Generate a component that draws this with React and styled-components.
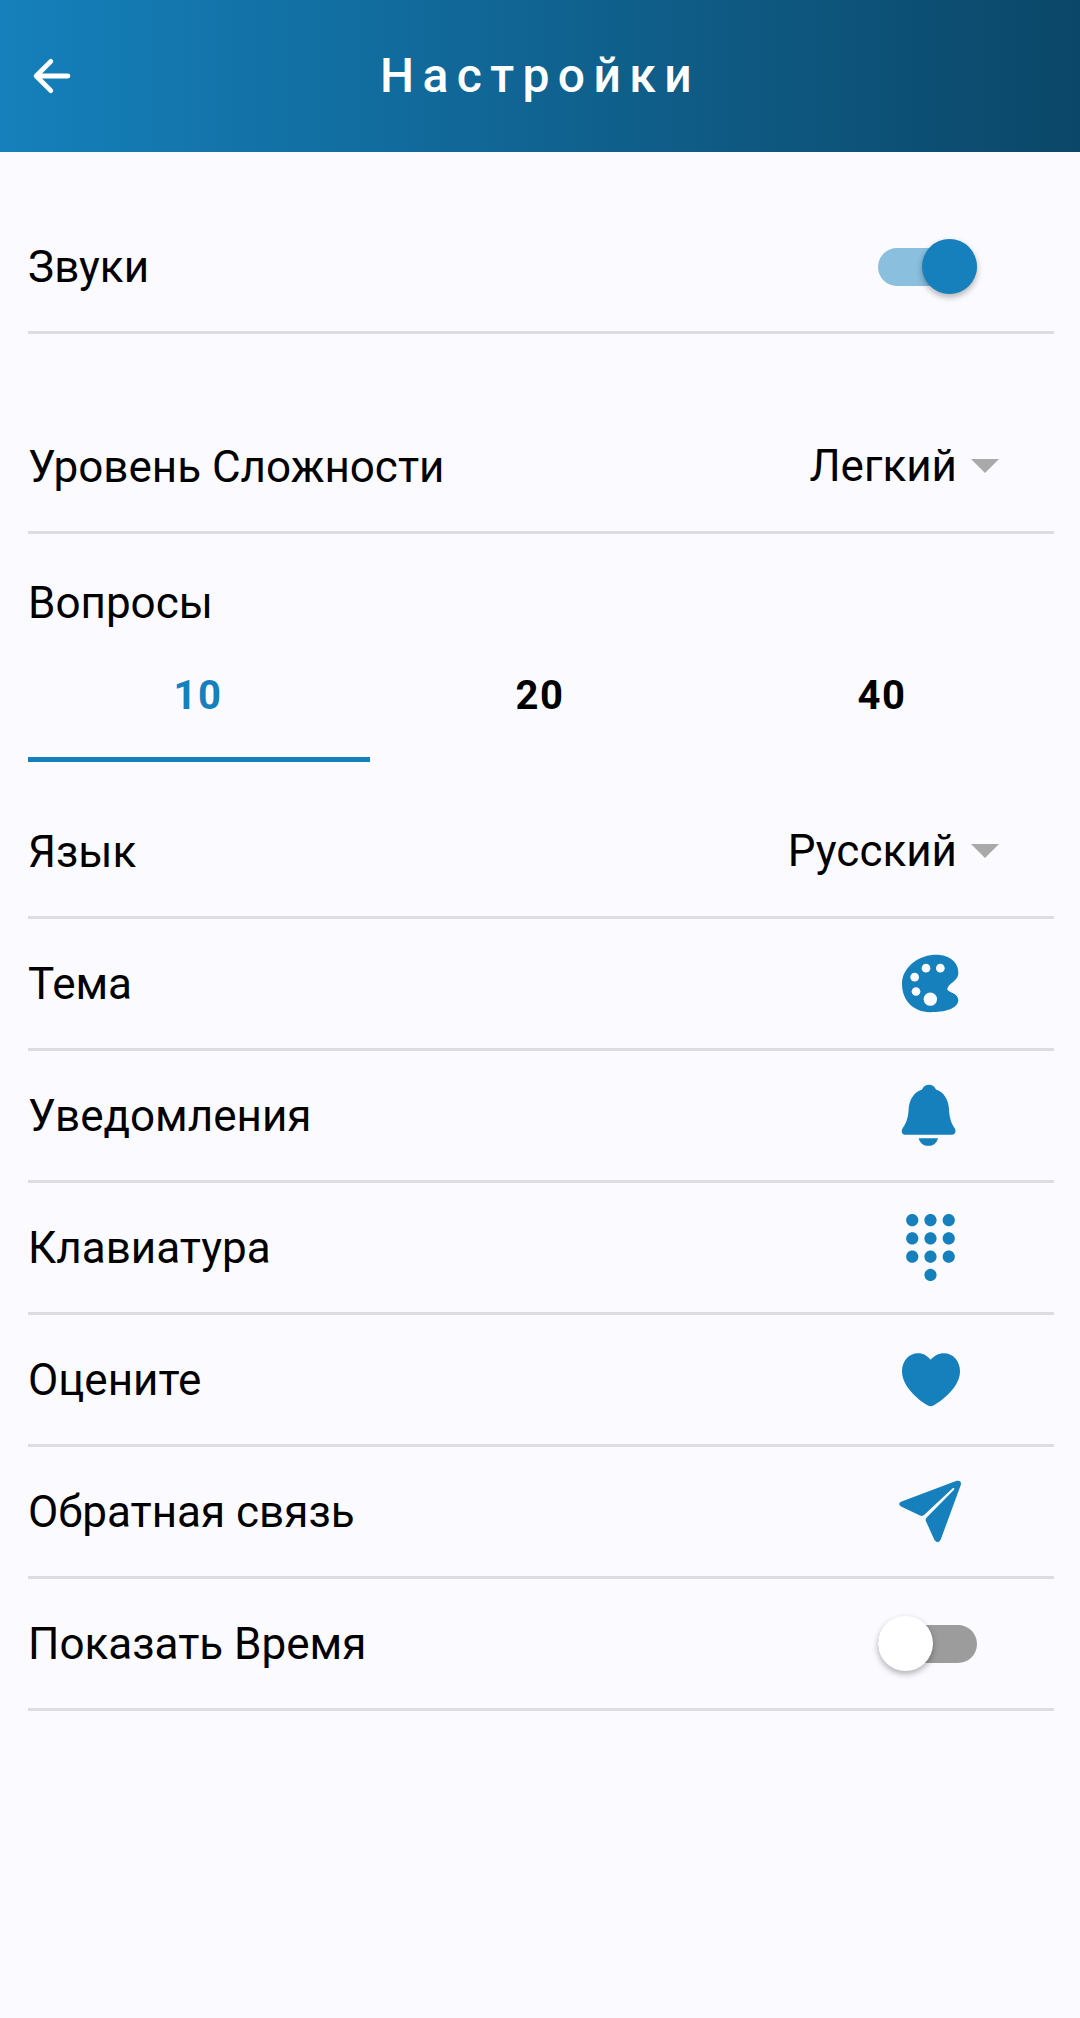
import React from 'react';
import styled, { createGlobalStyle } from 'styled-components';
import { IoArrowBack } from 'react-icons/io5';
import { MdDialpad } from 'react-icons/md';

const GlobalStyle = createGlobalStyle`
    html, body {
        margin: 0;
        padding: 0;
        background: #fbfbff;
        font-family: Roboto, "Liberation Sans", sans-serif;
    }
`;

const Screen = styled.div`
    width: 1080px;
    height: 2018px;
    background: #fbfbff;
    overflow: hidden;
`;

const Header = styled.header`
    height: 152px;
    padding: 0 26px;
    box-sizing: border-box;
    display: flex;
    align-items: center;
    position: relative;
    background: linear-gradient(90deg, #1580bb 0%, #0b4768 100%);
    color: #fff;
`;

const BackIcon = styled(IoArrowBack)`
    width: 52px;
    height: 52px;
`;

const Title = styled.h1`
    flex: 1;
    margin: 0 0 0 -52px;
    padding-bottom: 2px;
    text-align: center;
    font-size: 48px;
    font-weight: 500;
    letter-spacing: 8.4px;
`;

const List = styled.main`
    padding: 50px 26px 0 28px;
`;

const Row = styled.div`
    height: 129px;
    margin-top: ${props => props.$top || 0}px;
    border-bottom: 3px solid #dcdce1;
    display: flex;
    align-items: center;
    justify-content: space-between;
`;

const Label = styled.span`
    font-size: 44px;
    color: #000;
`;

const SideSlot = styled.div`
    width: 100px;
    margin-right: 77px;
    display: flex;
    justify-content: center;
    color: #1580bb;
`;

const IconSlot = styled(SideSlot)`
    width: 80px;
    margin-right: 84px;
`;

const Select = styled.div`
    display: flex;
    align-items: center;
    margin-right: 54px;
    padding-bottom: 2px;
    font-size: 44px;
    color: #000;
`;

const Caret = styled.i`
    width: 0;
    height: 0;
    margin-left: 14px;
    margin-right: 1px;
    border-left: 14px solid transparent;
    border-right: 14px solid transparent;
    border-top: 14px solid #a9a9a9;
`;

const Track = styled.div`
    width: 99px;
    height: 38px;
    border-radius: 19px;
    position: relative;
    background: ${props => props.$on ? '#8abfdd' : '#9c9c9c'};
`;

const Thumb = styled.div`
    width: 55px;
    height: 55px;
    border-radius: 50%;
    position: absolute;
    top: -9px;
    ${props => props.$on ? 'right: 0;' : 'left: 0;'}
    background: ${props => props.$on ? '#1580bb' : '#fff'};
    box-shadow: 0 3px 6px rgba(0, 0, 0, 0.3);
`;

const QuestionsTitle = styled.div`
    font-size: 44px;
    color: #000;
    padding-top: 45px;
    line-height: 49px;
`;

const Tabs = styled.div`
    display: flex;
    width: 1026px;
    margin-top: 27px;
`;

const Tab = styled.div`
    flex: 1;
    height: 107px;
    padding: 17px 2px 0 0;
    box-sizing: border-box;
    text-align: center;
    font-size: 40px;
    font-weight: 700;
    letter-spacing: 1.5px;
    color: ${props => props.$active ? '#1580bb' : '#000'};
    border-bottom: 5px solid ${props => props.$active ? '#1580bb' : 'transparent'};
`;

function Toggle({ on }) {
    return (
        <Track $on={on}>
            <Thumb $on={on} />
        </Track>
    );
}

// icons traced on a 240 grid, the offset keeps them centred in the row
function Glyph({ offset = 0, children }) {
    return (
        <svg width="80" height="80" viewBox={`0 ${offset} 240 240`} fill="currentColor">
            {children}
        </svg>
    );
}

const PaletteIcon = () => (
    <Glyph offset={-4.5}>
        <path d="M130 28C175 24 208 50 205 85C203 108 176 112 172 130C170 142 205 140 205 165C202 190 165 200 120 200C70 200 36 165 36 115C36 70 80 32 130 28Z" />
        <circle cx="108" cy="68" r="13" fill="#fbfbff" />
        <circle cx="151" cy="68" r="13" fill="#fbfbff" />
        <circle cx="74" cy="95" r="13" fill="#fbfbff" />
        <circle cx="78" cy="138" r="13" fill="#fbfbff" />
        <circle cx="121" cy="161" r="20" fill="#fbfbff" />
    </Glyph>
);

const BellIcon = () => (
    <Glyph offset={1.5}>
        <path d="M117 28C127 28 134 34 138 42C162 50 175 72 177 100C178 130 185 145 194 158C200 168 195 178 184 178L47 178C36 178 32 168 38 158C47 145 55 130 56 100C58 72 72 50 96 42C100 34 107 28 117 28Z" />
        <path d="M86 188L144 188C140 203 130 211 115 211C100 211 90 203 86 188Z" />
    </Glyph>
);

const HeartIcon = () => (
    <Glyph offset={-1.5}>
        <path d="M122 58C135 42 150 38 162 38C190 38 210 62 210 92C210 135 165 175 130 195Q122 199 114 195C80 175 36 135 36 92C36 62 56 38 84 38C96 38 110 42 122 58Z" />
    </Glyph>
);

const PlaneIcon = () => (
    <Glyph offset={4.5}>
        <path d="M200 31Q216 28 212 44L152 208Q143 222 133 208L107 150Q106 145 110 141L192 58Q195 52 188 53L103 133Q97 138 90 135L33 108Q22 100 33 94Z" />
    </Glyph>
);

const iconRows = [
    { label: 'Тема', icon: <PaletteIcon /> },
    { label: 'Уведомления', icon: <BellIcon /> },
    { label: 'Клавиатура', icon: <MdDialpad size={73} /> },
    { label: 'Оцените', icon: <HeartIcon /> },
    { label: 'Обратная связь', icon: <PlaneIcon /> },
];

function App() {
    return (
        <Screen>
            <GlobalStyle />
            <Header>
                <BackIcon />
                <Title>Настройки</Title>
            </Header>
            <List>
                <Row>
                    <Label>Звуки</Label>
                    <SideSlot><Toggle on /></SideSlot>
                </Row>
                <Row $top={68}>
                    <Label>Уровень Сложности</Label>
                    <Select>Легкий<Caret /></Select>
                </Row>
                <QuestionsTitle>Вопросы</QuestionsTitle>
                <Tabs>
                    <Tab $active>10</Tab>
                    <Tab>20</Tab>
                    <Tab>40</Tab>
                </Tabs>
                <Row $top={25}>
                    <Label>Язык</Label>
                    <Select>Русский<Caret /></Select>
                </Row>
                {iconRows.map(row => (
                    <Row key={row.label}>
                        <Label>{row.label}</Label>
                        <IconSlot>{row.icon}</IconSlot>
                    </Row>
                ))}
                <Row>
                    <Label>Показать Время</Label>
                    <SideSlot><Toggle /></SideSlot>
                </Row>
            </List>
        </Screen>
    );
}

export default App;
